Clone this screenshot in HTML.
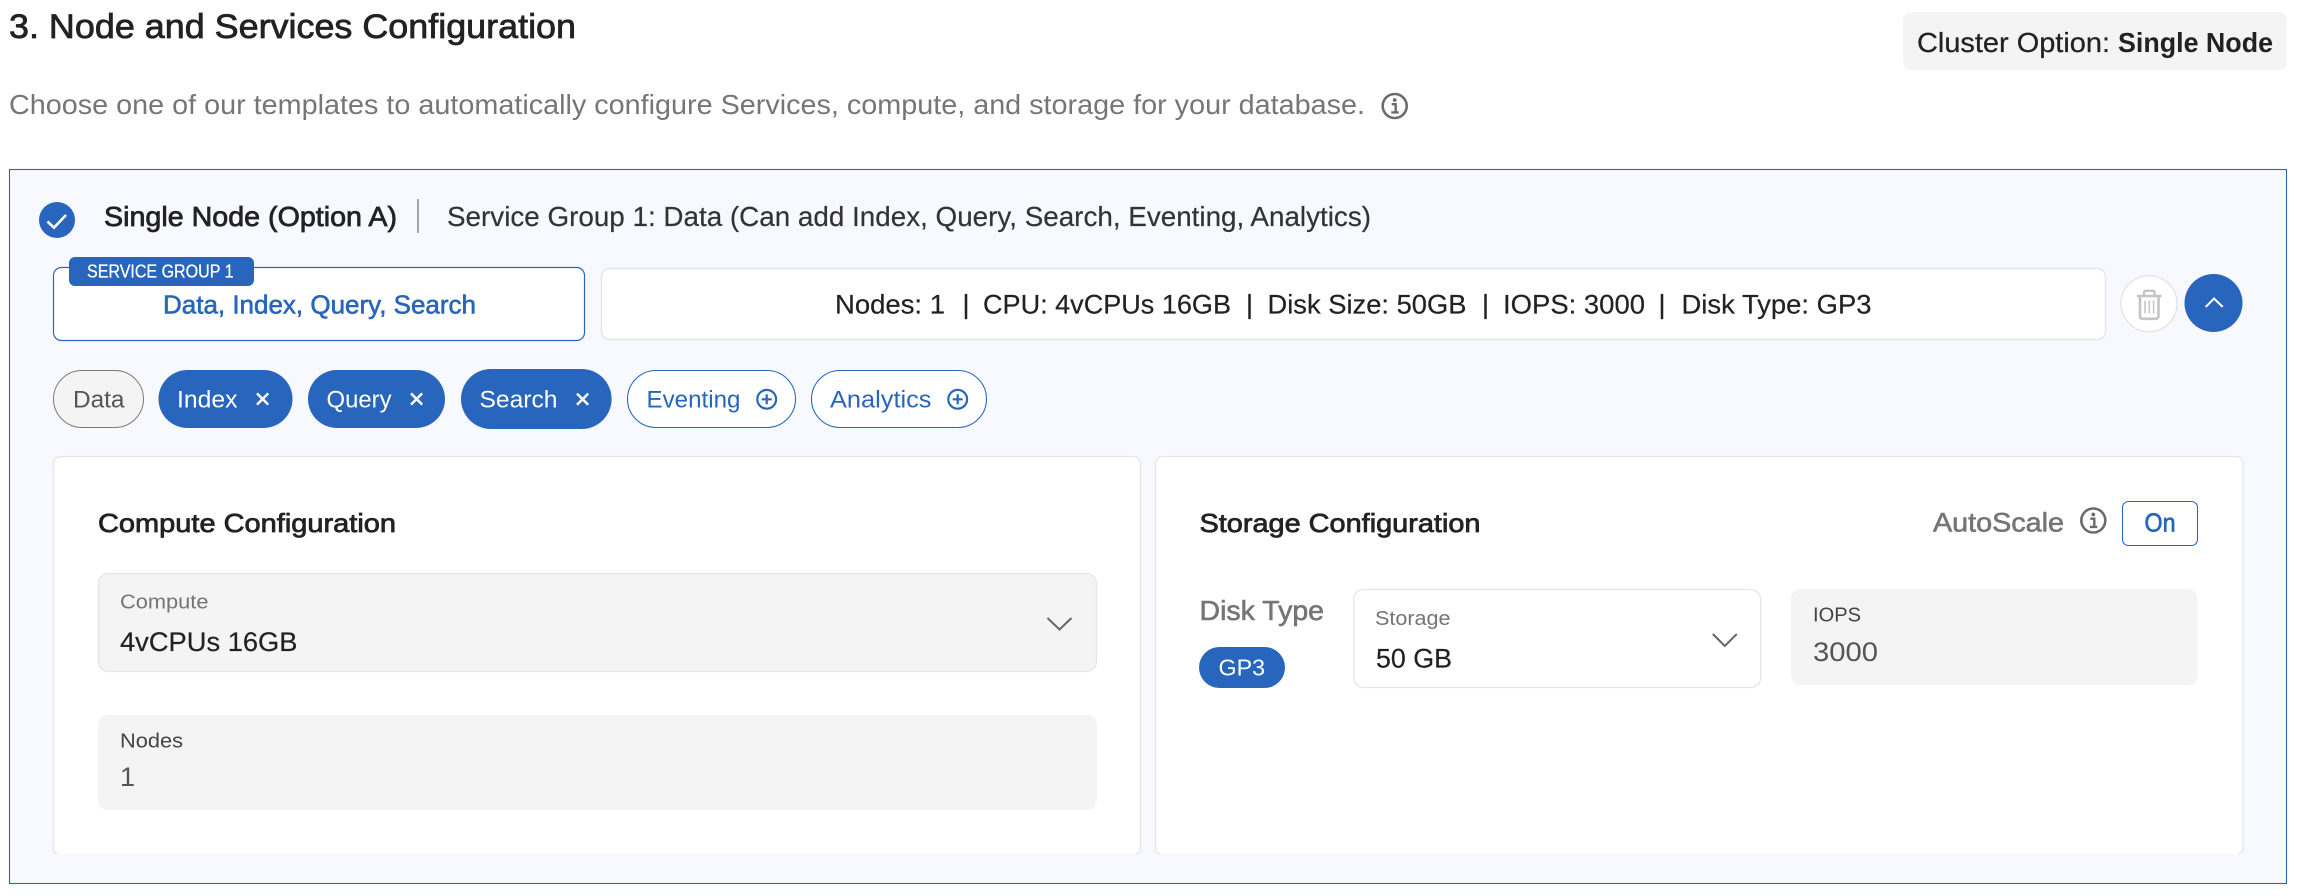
<!DOCTYPE html>
<html lang="en">
<head>
<meta charset="utf-8">
<title>Node and Services Configuration</title>
<style>
html,body{margin:0;padding:0;background:#fff;width:2298px;height:896px;overflow:hidden}
svg{display:block}
text{font-family:"Liberation Sans",Arial,sans-serif;white-space:pre}
.m{stroke-width:.75px}
.s{font-size:27px;fill:#222;stroke:#222;stroke-width:.2px}
</style>
</head>
<body>
<svg xmlns="http://www.w3.org/2000/svg" width="2298" height="896" viewBox="0 0 2298 896">
<defs>
<g id="info"><circle cx="0" cy="0" r="12" fill="none" stroke="#6b6b6b" stroke-width="2.6"/><circle cx="0" cy="-6" r="1.9" fill="#6b6b6b"/><path d="M-3-1.8H1V5.6M-3.4 6.4H4" fill="none" stroke="#6b6b6b" stroke-width="2.4"/></g>
<g id="x"><path d="M-5.6-5.6L5.6 5.6M5.6-5.6L-5.6 5.6" stroke="#fff" stroke-width="2.5" fill="none"/></g>
<g id="plus"><circle r="9.4" fill="none" stroke="#2866bd" stroke-width="2.2"/><path d="M-5 0H5M0-5V5" stroke="#2866bd" stroke-width="2.2" fill="none"/></g>
</defs>

<rect width="2298" height="896" fill="#fff"/>

<!-- header -->
<text x="9" y="38" font-size="34" fill="#222" stroke="#222" class="m" textLength="567" lengthAdjust="spacingAndGlyphs">3. Node and Services Configuration</text>
<text x="9" y="114" font-size="28" fill="#767676" textLength="1356" lengthAdjust="spacingAndGlyphs">Choose one of our templates to automatically configure Services, compute, and storage for your database.</text>
<use href="#info" x="1394.7" y="106"/>

<rect x="1903" y="12" width="384" height="58" rx="8" fill="#f4f4f4"/>
<text x="1917" y="52" font-size="28" fill="#222" stroke="#222" stroke-width=".25" textLength="193" lengthAdjust="spacingAndGlyphs">Cluster Option:</text>
<text x="2118" y="52" font-size="28" font-weight="700" fill="#222" textLength="155" lengthAdjust="spacingAndGlyphs">Single Node</text>

<!-- main box -->
<rect x="9.5" y="169.5" width="2277" height="714" fill="#f8f9fe" stroke="#2866bd" stroke-width="1.1"/>

<circle cx="57" cy="220" r="18" fill="#2866bd"/>
<path d="M47.5 221.5L54 227.7L66 215" fill="none" stroke="#fff" stroke-width="2.6"/>
<text x="104" y="226" font-size="28" fill="#222" stroke="#222" class="m" textLength="293" lengthAdjust="spacingAndGlyphs">Single Node (Option A)</text>
<rect x="417.5" y="199" width="1" height="34" fill="#555"/>
<text x="447" y="226" font-size="28" fill="#333" stroke="#333" stroke-width=".2" textLength="924" lengthAdjust="spacingAndGlyphs">Service Group 1: Data (Can add Index, Query, Search, Eventing, Analytics)</text>

<!-- service group card -->
<rect x="53.5" y="267.5" width="531" height="73" rx="8" fill="#fff" stroke="#2866bd" stroke-width="1.2"/>
<rect x="69" y="257" width="185" height="29" rx="6" fill="#2866bd"/>
<text x="87" y="277.3" font-size="18.5" fill="#fff" stroke="#fff" stroke-width=".25" textLength="146.5" lengthAdjust="spacingAndGlyphs">SERVICE GROUP 1</text>
<text x="163" y="313.3" font-size="26" fill="#2866bd" stroke="#2866bd" stroke-width=".6" textLength="313" lengthAdjust="spacingAndGlyphs">Data, Index, Query, Search</text>

<!-- summary card -->
<rect x="601.5" y="268.5" width="1504" height="71" rx="8" fill="#fff" stroke="#e6e6ea" stroke-width="1.4"/>
<text x="835" y="313.3" class="s" textLength="110" lengthAdjust="spacingAndGlyphs">Nodes: 1</text>
<text x="962.5" y="313.3" class="s">|</text>
<text x="983" y="313.3" class="s" textLength="248" lengthAdjust="spacingAndGlyphs">CPU: 4vCPUs 16GB</text>
<text x="1246" y="313.3" class="s">|</text>
<text x="1267.5" y="313.3" class="s" textLength="199" lengthAdjust="spacingAndGlyphs">Disk Size: 50GB</text>
<text x="1482" y="313.3" class="s">|</text>
<text x="1503" y="313.3" class="s" textLength="142" lengthAdjust="spacingAndGlyphs">IOPS: 3000</text>
<text x="1658.5" y="313.3" class="s">|</text>
<text x="1681.5" y="313.3" class="s" textLength="190" lengthAdjust="spacingAndGlyphs">Disk Type: GP3</text>

<!-- trash -->
<circle cx="2149" cy="303.7" r="28" fill="#fff" stroke="#e5e5e5" stroke-width="1.4"/>
<path d="M2137 296H2161.5M2144 295.5V292.5Q2144 290.8 2146 290.8H2152.5Q2154.5 290.8 2154.5 292.5V295.5" fill="none" stroke="#c4c4c4" stroke-width="2.4"/>
<path d="M2140 296.5V316Q2140 318.8 2143 318.8H2155.5Q2158.5 318.8 2158.5 316V296.5" fill="none" stroke="#c4c4c4" stroke-width="2.6"/>
<path d="M2145 300.5V313.5M2149.3 300.5V313.5M2153.6 300.5V313.5" fill="none" stroke="#c4c4c4" stroke-width="1.5"/>

<!-- collapse -->
<circle cx="2213.5" cy="303" r="29" fill="#2866bd"/>
<path d="M2205.7 306.9L2214 298.5L2222.7 306.9" fill="none" stroke="#fff" stroke-width="2"/>

<!-- chips -->
<rect x="53.5" y="370.5" width="90" height="57" rx="28.5" fill="#f4f4f4" stroke="#7a7a7a" stroke-width="1"/>
<text x="73" y="407.3" font-size="24.5" fill="#555" textLength="51.5" lengthAdjust="spacingAndGlyphs">Data</text>

<rect x="158.5" y="370" width="134" height="58" rx="29" fill="#2866bd"/>
<text x="177" y="407.3" font-size="24.5" fill="#fff" textLength="60.5" lengthAdjust="spacingAndGlyphs">Index</text>
<use href="#x" x="262.6" y="399"/>

<rect x="308" y="370" width="137" height="58" rx="29" fill="#2866bd"/>
<text x="326.5" y="407.3" font-size="24.5" fill="#fff" textLength="65" lengthAdjust="spacingAndGlyphs">Query</text>
<use href="#x" x="416.6" y="399"/>

<rect x="461" y="369" width="150.6" height="60" rx="30" fill="#2866bd"/>
<text x="479.5" y="407.3" font-size="24.5" fill="#fff" textLength="78" lengthAdjust="spacingAndGlyphs">Search</text>
<use href="#x" x="582.6" y="399.2"/>

<rect x="627.5" y="370.5" width="168" height="57" rx="28.5" fill="#fff" stroke="#2866bd" stroke-width="1.1"/>
<text x="646.5" y="407.3" font-size="24.5" fill="#2866bd" textLength="94" lengthAdjust="spacingAndGlyphs">Eventing</text>
<use href="#plus" x="766.7" y="399.3"/>

<rect x="811.5" y="370.5" width="175" height="57" rx="28.5" fill="#fff" stroke="#2866bd" stroke-width="1.1"/>
<text x="830" y="407.3" font-size="24.5" fill="#2866bd" textLength="101.5" lengthAdjust="spacingAndGlyphs">Analytics</text>
<use href="#plus" x="957.7" y="399.3"/>

<!-- compute panel -->
<path d="M53.5 847.7V464.5Q53.5 456.5 61.5 456.5H1132.5Q1140.5 456.5 1140.5 464.5V847.7Q1140.5 853.7 1134.5 853.7H59.5Q53.5 853.7 53.5 847.7Z" fill="#fff"/>
<path d="M58.5 853.7Q53.5 853.7 53.5 847.7V464.5Q53.5 456.5 61.5 456.5H1132.5Q1140.5 456.5 1140.5 464.5V847.7Q1140.5 853.7 1135.5 853.7" fill="none" stroke="#e6e6ea" stroke-width="1.3"/>
<text x="98" y="532" font-size="26" fill="#222" stroke="#222" class="m" textLength="298" lengthAdjust="spacingAndGlyphs">Compute Configuration</text>

<rect x="98.5" y="573.5" width="998" height="98" rx="10" fill="#f4f4f4" stroke="#e6e6e6" stroke-width="1.3"/>
<text x="120" y="608.3" font-size="20" fill="#757575" textLength="88.5" lengthAdjust="spacingAndGlyphs">Compute</text>
<text x="120" y="651" font-size="27" fill="#222" stroke="#222" stroke-width=".2" textLength="177.5" lengthAdjust="spacingAndGlyphs">4vCPUs 16GB</text>
<path d="M1047.5 618L1059.5 629.5L1071.5 618" fill="none" stroke="#666" stroke-width="2"/>

<rect x="98" y="715" width="999" height="95" rx="10" fill="#f4f4f4"/>
<text x="120" y="747.7" font-size="20" fill="#444" textLength="63" lengthAdjust="spacingAndGlyphs">Nodes</text>
<text x="120" y="786" font-size="27" fill="#555">1</text>

<!-- storage panel -->
<path d="M1155.5 847.7V464.5Q1155.5 456.5 1163.5 456.5H2235Q2243 456.5 2243 464.5V847.7Q2243 853.7 2237 853.7H1161.5Q1155.5 853.7 1155.5 847.7Z" fill="#fff"/>
<path d="M1160.5 853.7Q1155.5 853.7 1155.5 847.7V464.5Q1155.5 456.5 1163.5 456.5H2235Q2243 456.5 2243 464.5V847.7Q2243 853.7 2238 853.7" fill="none" stroke="#e6e6ea" stroke-width="1.3"/>
<text x="1199.5" y="532" font-size="26" fill="#222" stroke="#222" class="m" textLength="281" lengthAdjust="spacingAndGlyphs">Storage Configuration</text>

<text x="1933" y="531.7" font-size="27" fill="#757575" stroke="#757575" stroke-width=".6" textLength="131" lengthAdjust="spacingAndGlyphs">AutoScale</text>
<use href="#info" x="2093.3" y="520.5"/>
<rect x="2122.5" y="501.5" width="75" height="44" rx="6" fill="#fff" stroke="#2866bd" stroke-width="1.1"/>
<text x="2144.5" y="531.7" font-size="26" fill="#2866bd" stroke="#2866bd" stroke-width=".7" textLength="31" lengthAdjust="spacingAndGlyphs">On</text>

<text x="1199.5" y="620" font-size="28" fill="#757575" stroke="#757575" stroke-width=".6" textLength="124.5" lengthAdjust="spacingAndGlyphs">Disk Type</text>
<rect x="1199" y="647" width="86" height="41" rx="20.5" fill="#2866bd"/>
<text x="1218.5" y="675.3" font-size="23.5" fill="#fff" textLength="46.5" lengthAdjust="spacingAndGlyphs">GP3</text>

<rect x="1353.7" y="589.5" width="407" height="98" rx="10" fill="#fff" stroke="#e6e6e6" stroke-width="1.3"/>
<text x="1375" y="625" font-size="20" fill="#757575" textLength="75.5" lengthAdjust="spacingAndGlyphs">Storage</text>
<text x="1376" y="667.7" font-size="27" fill="#222" stroke="#222" stroke-width=".2" textLength="76" lengthAdjust="spacingAndGlyphs">50 GB</text>
<path d="M1712.8 634L1724.8 646L1736.8 634" fill="none" stroke="#666" stroke-width="2"/>

<rect x="1791" y="589" width="406.6" height="96" rx="10" fill="#f4f4f4"/>
<text x="1813" y="621.7" font-size="20" fill="#444" textLength="48" lengthAdjust="spacingAndGlyphs">IOPS</text>
<text x="1813" y="661" font-size="27" fill="#555" textLength="65" lengthAdjust="spacingAndGlyphs">3000</text>
</svg>
</body>
</html>
